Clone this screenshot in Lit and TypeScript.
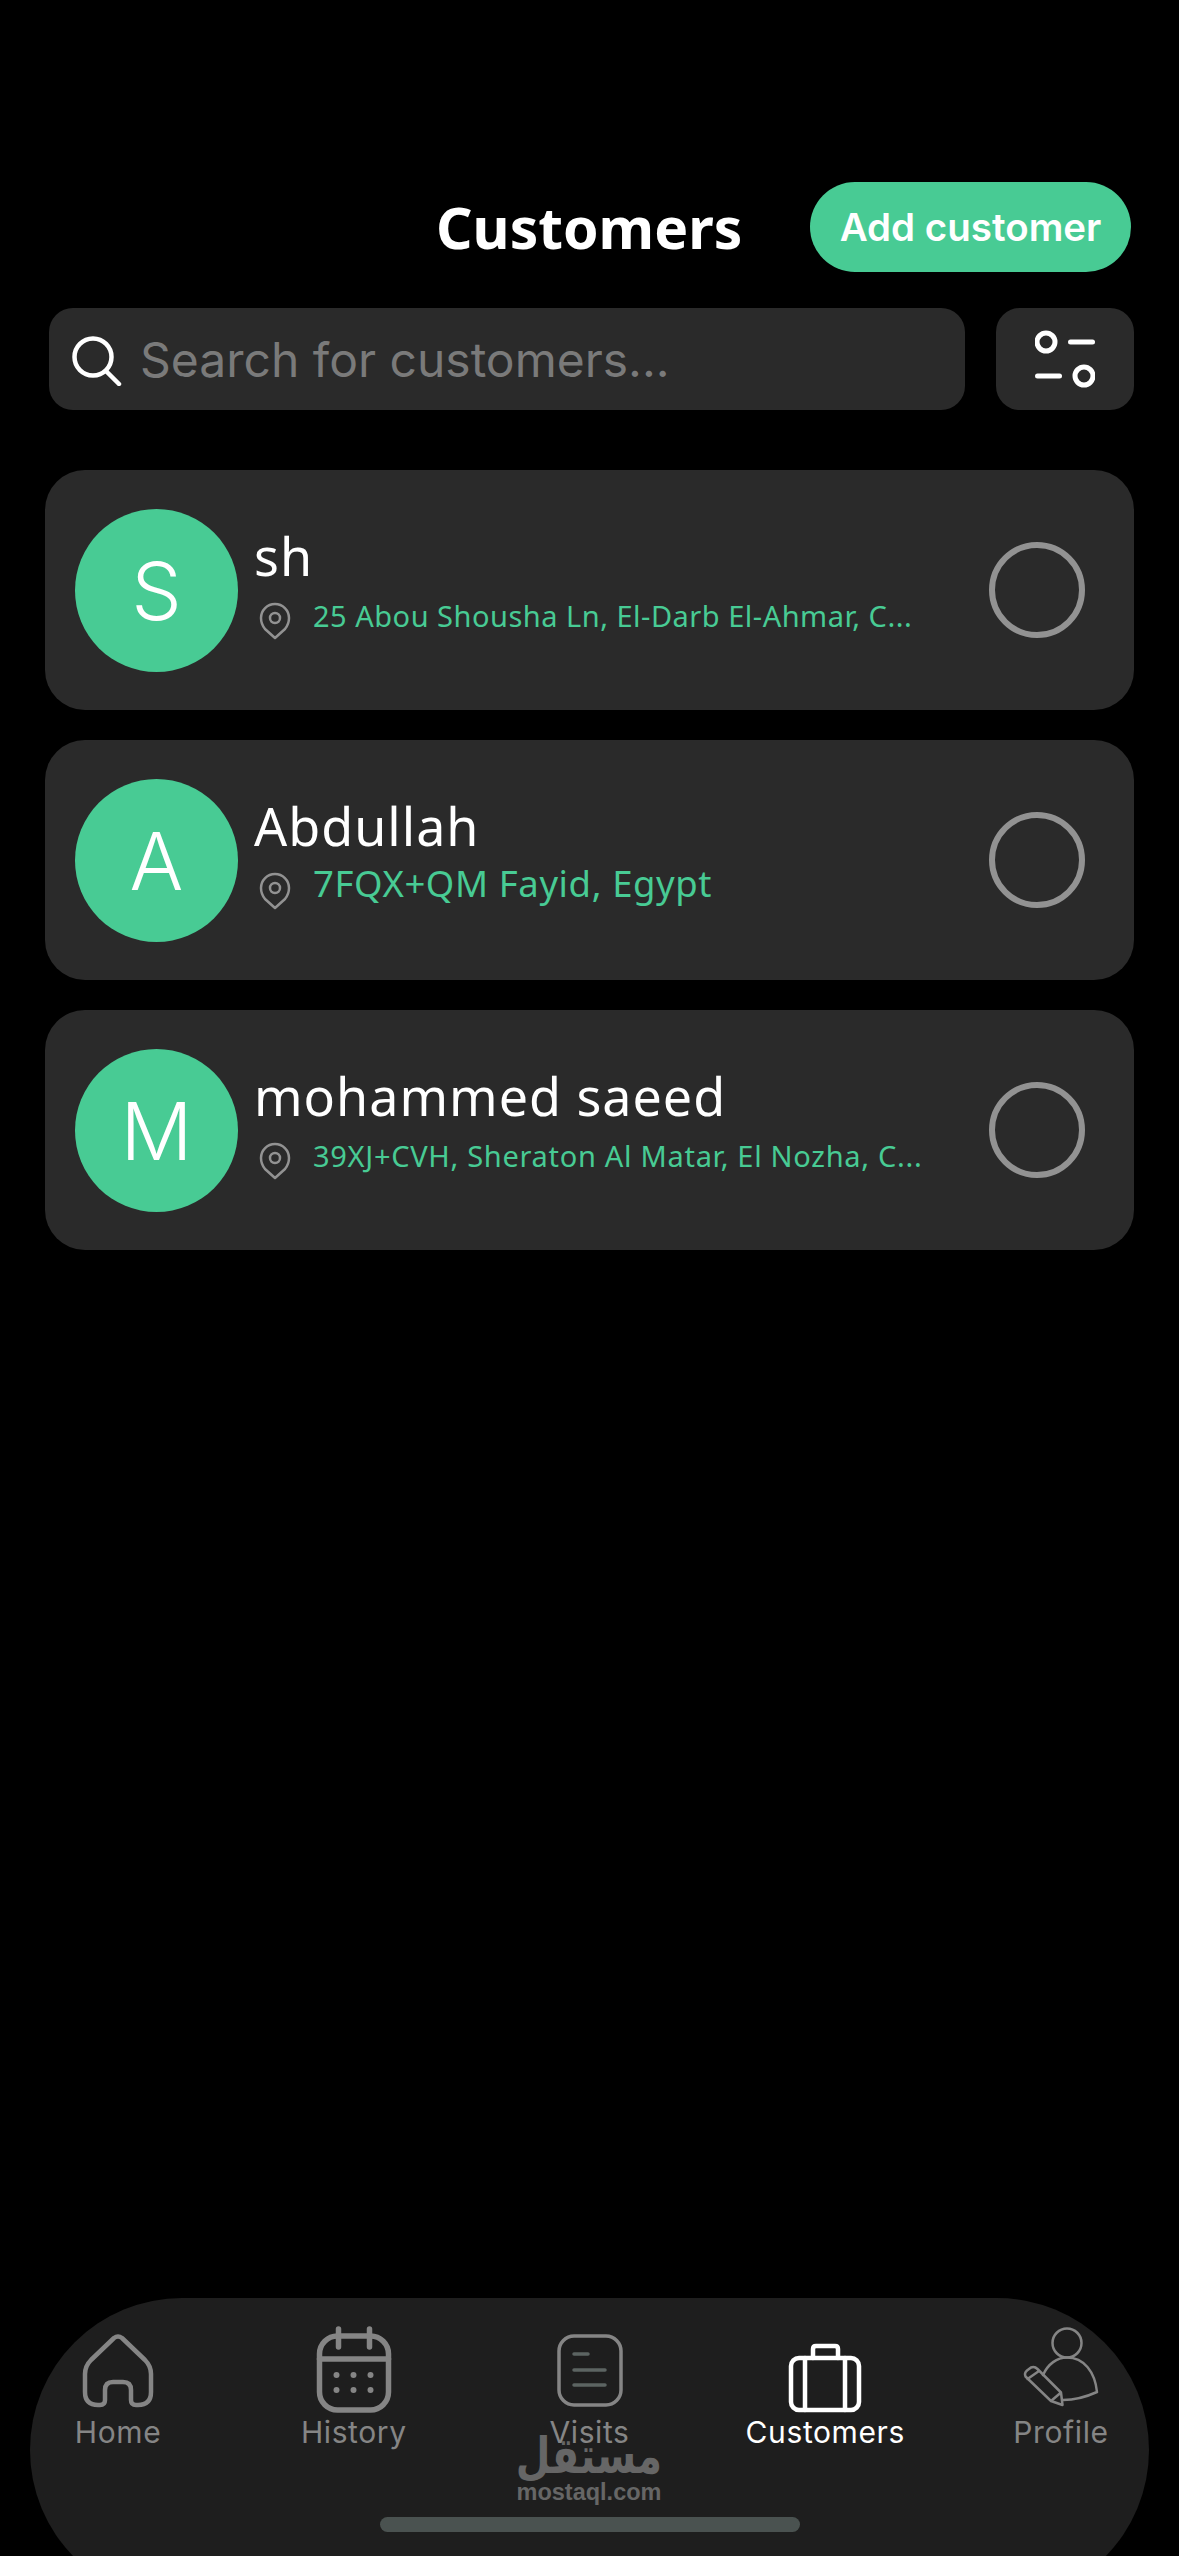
import { LitElement, html, css, svg } from "lit";
import { customElement } from "lit/decorators.js";

type Customer = { initial: string; name: string; address: string; size: "one" | "two" | "three" };

const customers: Customer[] = [
  { initial: "S", name: "sh", address: "25 Abou Shousha Ln, El-Darb El-Ahmar, C...", size: "one" },
  { initial: "A", name: "Abdullah", address: "7FQX+QM Fayid, Egypt", size: "two" },
  { initial: "M", name: "mohammed saeed", address: "39XJ+CVH, Sheraton Al Matar, El Nozha, C...", size: "three" },
];

// nav icons, drawn in page pixels so they line up with the reference
const homeIcon = svg`<path d="M30 4 Q34 1 38 4 L61 26 Q67 32 67 40 V58 Q67 71 54 71 H52 Q47 71 47 66 V56 Q47 48 39 48 H29 Q21 48 21 56 V66 Q21 71 16 71 H14 Q1 71 1 58 V40 Q1 32 7 26 Z" />`;
const calendarIcon = svg`
  <rect x="3" y="9" width="69" height="74" rx="18" />
  <path d="M3 32 H72 M22 2 V20 M53 2 V20" />
  <g class="fill">
    <circle cx="20" cy="48" r="3" /><circle cx="37" cy="48" r="3" /><circle cx="54" cy="48" r="3" />
    <circle cx="20" cy="63" r="3" /><circle cx="37" cy="63" r="3" /><circle cx="54" cy="63" r="3" />
  </g>`;
const visitsIcon = svg`
  <rect x="2" y="2" width="62" height="69" rx="15" />
  <path class="dim" d="M17 20 H31 M17 36 H48 M17 51 H48" />`;
const caseIcon = svg`
  <rect x="2" y="14" width="68" height="52" rx="8" />
  <path d="M16 14 V66 M56 14 V66 M24 14 V5 Q24 2 27 2 H46 Q49 2 49 5 V14" />`;
const profileIcon = svg`
  <circle cx="43" cy="15" r="14.5" />
  <path d="M19 47 C24 36 33 29.5 43 29.5 C60 29.5 71 44 73 64 C62 69 50 72 39 72" />
  <path d="M1.5 48.5 Q0 45 3 42.5 L7 39.5 Q10.5 38 13.5 41 L37 64.5 L38.5 77 L27 73 Z M27 73 L37 64.5 M3.5 51 L15 43" />`;

const navItems = [
  { label: "Home", icon: homeIcon, w: 68, h: 72, top: 36, sw: 4.5 },
  { label: "History", icon: calendarIcon, w: 75, h: 86, top: 29, sw: 5.5 },
  { label: "Visits", icon: visitsIcon, w: 66, h: 74, top: 36, sw: 3.5 },
  { label: "Customers", icon: caseIcon, w: 72, h: 69, top: 46, sw: 4.5, active: true },
  { label: "Profile", icon: profileIcon, w: 74, h: 78, top: 30, sw: 2.5 },
];

@customElement("app-root")
export class AppRoot extends LitElement {
  static override styles = css`
    :host {
      display: block;
      width: 1179px;
      height: 2556px;
      background: #000;
      overflow: hidden;
      font-family: "Noto Sans", sans-serif;
    }

    .page {
      position: relative;
      height: 2556px;
      display: flex;
      flex-direction: column;
      overflow: hidden;
    }

    /* Header */
    .header {
      display: flex;
      align-items: center;
      height: 90px;
      margin-top: 182px;
      padding-left: 436px;
    }

    .title {
      width: 374px;
      color: #fff;
      font-size: 57px;
      font-weight: 700;
      line-height: 88px;
    }

    .add {
      width: 321px;
      height: 90px;
      border-radius: 45px;
      background: #48cb94;
      color: #fff;
      display: flex;
      align-items: center;
      justify-content: center;
      font-family: Inter, sans-serif;
      font-size: 38.5px;
      font-weight: 600;
    }

    /* Search */
    .search-row {
      display: flex;
      gap: 31px;
      margin: 36px 45px 0 49px;
      height: 102px;
    }

    .search {
      width: 916px;
      border-radius: 24px;
      background: #2a2a2a;
      display: flex;
      align-items: center;
      padding-left: 23px;
      box-sizing: border-box;
      gap: 18px;
      color: #7a7a7a;
      font-family: Inter, sans-serif;
      font-size: 48px;
    }

    .search svg {
      margin-top: 4px;
    }

    .filter {
      flex: 1;
      border-radius: 24px;
      background: #2a2a2a;
      display: flex;
      align-items: center;
      justify-content: center;
    }

    /* Customer cards */
    .list {
      display: flex;
      flex-direction: column;
      gap: 30px;
      margin: 60px 45px 0 45px;
    }

    .card {
      height: 240px;
      border-radius: 40px;
      background: #2a2a2a;
      display: flex;
      align-items: center;
      padding-left: 30px;
      box-sizing: border-box;
    }

    .avatar {
      width: 163px;
      height: 163px;
      border-radius: 50%;
      background: #48cb94;
      color: #fff;
      display: flex;
      align-items: center;
      justify-content: center;
      flex: none;
      font-family: Inter, sans-serif;
      font-size: 80px;
      font-weight: 300;
    }

    .info {
      width: 735px;
      margin-left: 16px;
    }

    .name {
      color: #fff;
      font-size: 52px;
      line-height: 42px;
      margin-bottom: 20px;
      letter-spacing: 1px;
    }

    .address {
      display: flex;
      align-items: center;
      gap: 22px;
      padding-left: 5px;
      height: 48px;
      color: #48cb94;
      white-space: nowrap;
    }

    .address span {
      padding-bottom: 12px;
    }

    .address.one {
      font-size: 29px;
      letter-spacing: 0.5px;
    }

    .address.two {
      font-size: 36.5px;
      letter-spacing: 0.6px;
    }

    .address.two span {
      padding-bottom: 16px;
    }

    .address.three {
      font-size: 29px;
      letter-spacing: 0.7px;
    }

    .radio {
      width: 96px;
      height: 96px;
      box-sizing: border-box;
      border: 6px solid #929292;
      border-radius: 50%;
      flex: none;
    }

    /* Bottom nav */
    .nav {
      margin: auto 30px -46px;
      height: 304px;
      border-radius: 152px;
      background: #1e1e1e;
      display: flex;
      justify-content: space-between;
    }

    .item {
      width: 176px;
      position: relative;
      color: #858585;
      text-align: center;
      font-family: Inter, sans-serif;
      font-size: 30px;
      letter-spacing: 0.6px;
      line-height: 36px;
    }

    .item.active {
      color: #fff;
    }

    .item svg {
      position: absolute;
      left: 50%;
      transform: translateX(-50%);
      fill: none;
      stroke: currentColor;
      stroke-linecap: round;
      stroke-linejoin: round;
      overflow: visible;
    }

    .item svg .fill {
      fill: currentColor;
      stroke: none;
    }

    .item svg .dim {
      stroke: #5c6462;
    }

    .label {
      position: absolute;
      left: 0;
      right: 0;
      top: 116px;
    }

    .bar {
      position: absolute;
      left: 380px;
      top: 2517px;
      width: 420px;
      height: 15px;
      border-radius: 8px;
      background: #4a5250;
    }

    /* Watermark */
    .mark {
      position: absolute;
      left: 489px;
      top: 2434px;
      width: 200px;
      text-align: center;
      color: #666;
      pointer-events: none;
    }

    .mark .ar {
      font-family: "DejaVu Sans", sans-serif;
      font-size: 40px;
      font-weight: 700;
      line-height: 45px;
      transform: scaleY(1.25);
    }

    .mark .en {
      font-family: "Liberation Sans", sans-serif;
      font-size: 23.5px;
      font-weight: 700;
      line-height: 26px;
    }
  `;

  private renderCard(c: Customer) {
    return html`
      <div class="card">
        <div class="avatar">${c.initial}</div>
        <div class="info">
          <div class="name">${c.name}</div>
          <div class="address ${c.size}">
            <svg width="32" height="38" viewBox="0 0 32 38" fill="none" stroke="#929292" stroke-width="2.5">
              <path d="M16 36 L6 27 Q2 22 2 16 A14 14 0 0 1 30 16 Q30 22 26 27 Z" stroke-linejoin="round" />
              <circle cx="16" cy="16" r="5" />
            </svg>
            <span>${c.address}</span>
          </div>
        </div>
        <div class="radio"></div>
      </div>
    `;
  }

  override render() {
    return html`
      <div class="page">
        <div class="header">
          <div class="title">Customers</div>
          <div class="add">Add customer</div>
        </div>

        <div class="search-row">
          <div class="search">
            <svg width="50" height="50" viewBox="0 0 50 50" fill="none" stroke="#fff" stroke-width="4.5" stroke-linecap="round">
              <circle cx="21" cy="21" r="18.5" />
              <path d="M34 35 L47 48" />
            </svg>
            <span>Search for customers...</span>
          </div>
          <div class="filter">
            <svg width="60" height="58" viewBox="0 0 60 58" fill="none" stroke="#fff" stroke-width="5" stroke-linecap="round">
              <circle cx="11" cy="12" r="9" />
              <path d="M35.5 12 H57.5" />
              <path d="M2.5 46 H24.5" />
              <circle cx="49" cy="46" r="9" />
            </svg>
          </div>
        </div>

        <div class="list">${customers.map((c) => this.renderCard(c))}</div>

        <div class="nav">
          ${navItems.map(
            (n) => html`
              <div class="item ${n.active ? "active" : ""}">
                <svg
                  style="top: ${n.top}px"
                  width=${n.w}
                  height=${n.h}
                  viewBox="0 0 ${n.w} ${n.h}"
                  stroke-width=${n.sw}
                >
                  ${n.icon}
                </svg>
                <div class="label">${n.label}</div>
              </div>
            `
          )}
        </div>

        <div class="mark">
          <div class="ar">مستقل</div>
          <div class="en">mostaql.com</div>
        </div>
        <div class="bar"></div>
      </div>
    `;
  }
}
